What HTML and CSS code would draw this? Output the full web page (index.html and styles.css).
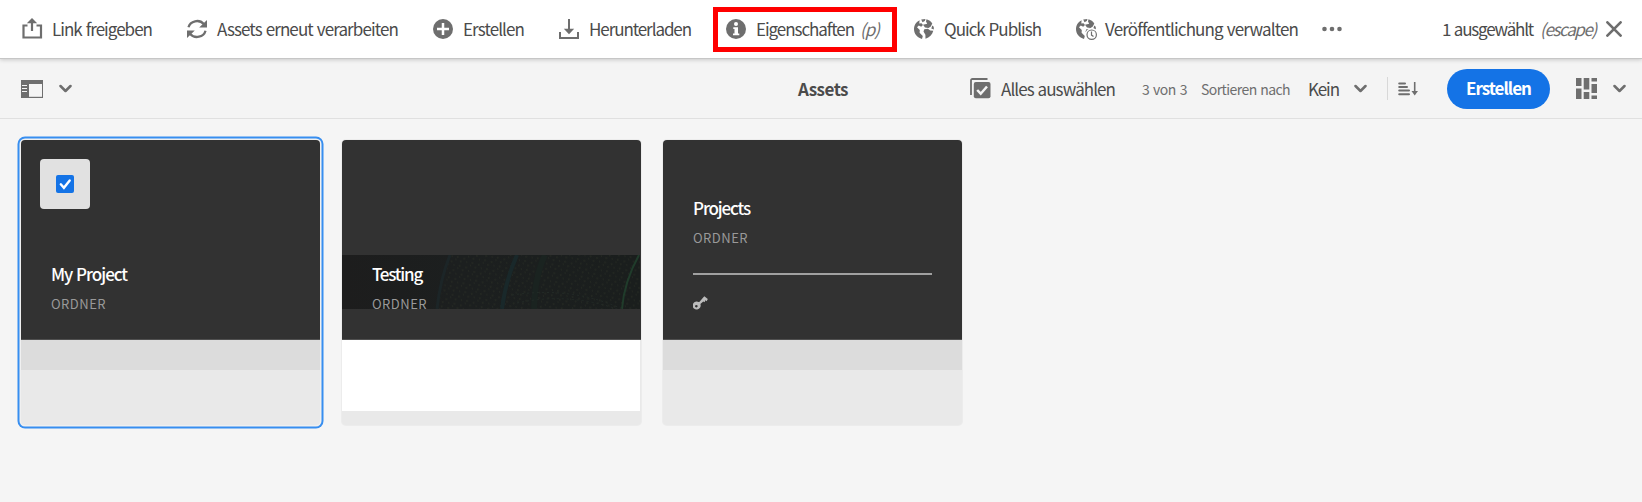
FILE: index.html
```
<!DOCTYPE html>
<html lang="de">
<head>
<meta charset="utf-8">
<title>Assets</title>
<link rel="stylesheet" href="styles.css">
</head>
<body>
<svg width="0" height="0" class="defs">
  <symbol id="globe" viewBox="0 0 20 20">
    <path d="M5.600 1.200C2.200 2.900 0 6.200 0 10c0 4.800 3.200 8.700 8 9.900L8.800 17 5.600 13.800 5.800 11 3 8.200 4.800 6.600 7.200 7.800 9 6 7.500 4.300 5.300 4.400Z"/>
    <path d="M7.200.5 11.500 0 10.800 2 8.500 3.200ZM12.500.3C15 1 17 2.400 18.300 4.500L16.800 7.600 14.500 9 11 8.600 9 5.700 13.200 4.700 12 2.500ZM10.300 10.300 13.900 9.800 16.200 11.500 19.300 11.800C18.300 15.700 15.500 18.600 11.500 19.800L11.400 15.700 9.500 12.600ZM18.300 6.500 19.700 7.800 19.900 10.500 17.300 9.500Z"/>
  </symbol>
  <symbol id="chevron" viewBox="0 0 13 9"><path d="M1.500 2 6.500 7 11.500 2" fill="none" stroke="#6e6e6e" stroke-width="2.500" stroke-linecap="round" stroke-linejoin="round"/></symbol>
</svg>
<header class="actions">
  <div class="action"><svg class="icon share" viewBox="0 0 22 22"><path d="M6.500 7.500H2.500v12h17.500V7.500h-4.500M11 13V4" fill="none" stroke="#6e6e6e" stroke-width="2.200"/><path d="M5.800 5.300 11 0 16.200 5.300Z"/></svg><span class="label w-link">Link freigeben</span></div>
  <div class="action"><svg class="icon" viewBox="0 0 20 20"><path d="M1.500 8.300A8.800 8.200 0 0 1 16.800 5M18.500 11.700A8.800 8.200 0 0 1 3.200 15" fill="none" stroke="#6e6e6e" stroke-width="2.300"/><path d="M20 1v7.500h-7.800ZM0 19v-7.500h7.800Z"/></svg><span class="label w-reprocess">Assets erneut verarbeiten</span></div>
  <div class="action"><svg class="icon" viewBox="0 0 20 20"><circle cx="10" cy="10" r="10"/><path d="M10 4v12M4 10h12" stroke="#fff" stroke-width="2.500"/></svg><span class="label w-create">Erstellen</span></div>
  <div class="action"><svg class="icon" viewBox="0 0 20 20"><path d="M1 13v6h18V13M10 0v12" fill="none" stroke="#6e6e6e" stroke-width="2"/><path d="M4.800 9.800H15.200L10 15.200Z"/></svg><span class="label w-download">Herunterladen</span></div>
  <div class="action highlighted"><svg class="icon" viewBox="0 0 20 20"><circle cx="10" cy="10" r="10"/><circle cx="10" cy="4.900" r="2" fill="#fff"/><path d="M7.300 8.300H12V14.600H13.300V16.300H7V14.600H8.500V10H7.300Z" fill="#fff"/></svg><span class="label w-props">Eigenschaften</span><i class="label shortcut w-p">(p)</i></div>
  <div class="action"><svg class="icon"><use href="#globe"/></svg><span class="label w-quick">Quick Publish</span></div>
  <div class="action"><svg class="icon schedule" viewBox="0 0 21 21"><use href="#globe" width="20" height="20"/><circle cx="15.700" cy="15.700" r="6.600" fill="#fff"/><circle cx="15.700" cy="15.700" r="4.700" fill="#fff" stroke="#6e6e6e" stroke-width="1.200"/><path d="M15.500 12.500v3.600l2 1.500" fill="none" stroke="#6e6e6e" stroke-width="1.200"/></svg><span class="label w-manage">Veröffentlichung verwalten</span></div>
  <svg class="more" viewBox="0 0 20 6"><circle cx="2.500" cy="3" r="2.300"/><circle cx="10" cy="3" r="2.300"/><circle cx="17.500" cy="3" r="2.300"/></svg>
  <div class="selection"><span class="label w-selected">1 ausgewählt</span><i class="label shortcut w-escape">(escape)</i><svg class="close" viewBox="0 0 15 15"><path d="M1.300 1.300 13.700 13.700M13.700 1.300 1.300 13.700" stroke="#6e6e6e" stroke-width="2.500" stroke-linecap="round"/></svg></div>
</header>
<nav class="bar">
  <div class="rail">
    <svg class="rail-icon" viewBox="0 0 22 18"><path d="M0 0H22V18H0Z"/><path d="M8 4H21V16.800H8Z" fill="#f4f4f4"/><path d="M1 5.500H6M1 8.500H6M1 11.500H6" stroke="#f4f4f4" stroke-width="1.200"/></svg>
    <svg class="chevron"><use href="#chevron"/></svg>
  </div>
  <strong class="label title w-assets">Assets</strong>
  <div class="tools">
    <svg class="select-icon" viewBox="0 0 21 21"><path d="M1 17V2.500Q1 1 2.500 1H17.500" fill="none" stroke="#6e6e6e" stroke-width="1.800"/><rect x="3.800" y="4" width="16.700" height="16.200" rx="2"/><path d="m7.200 12 3.500 3.700L17 8.500" fill="none" stroke="#f4f4f4" stroke-width="2.500"/></svg>
    <span class="label w-all">Alles auswählen</span>
    <span class="label small w-count">3 von 3</span>
    <span class="label small w-sort">Sortieren nach</span>
    <span class="label w-none">Kein</span>
    <svg class="chevron"><use href="#chevron"/></svg>
    <span class="divider"></span>
    <svg class="sort-icon" viewBox="0 0 20 14"><path d="M1.200 1.500H7M1.200 5H9M1.200 8.500H11M1.200 12.300H11" stroke="#6e6e6e" stroke-width="2" stroke-linecap="round"/><path d="M16.700 0v10" stroke="#6e6e6e" stroke-width="1.600"/><path d="M13.500 9H20L16.700 13.500Z"/></svg>
    <button class="create"><span class="label w-button">Erstellen</span></button>
    <svg class="view-icon" viewBox="0 0 21 21"><path d="M0 0H5.500V8H0ZM0 10.500H5.500V21H0ZM7.700 0H13.300V11.500H7.700ZM7.700 14H13.300V21H7.700ZM15.500 0H21V3.500H15.500ZM15.500 6H21V15H15.500ZM15.500 17.500H21V21H15.500Z"/></svg>
    <svg class="chevron"><use href="#chevron"/></svg>
  </div>
</nav>
<main class="cards">
  <article class="card selected">
    <div class="cover">
      <span class="check"><svg viewBox="0 0 18 18"><rect width="18" height="18" rx="2" fill="#1473e6"/><path d="m4.800 9.300 3.100 3.500L13.700 5.500" fill="none" stroke="#fff" stroke-width="2.400" stroke-linecap="round"/></svg></span>
      <h2 class="label w-my">My Project</h2><p class="label w-folder">ORDNER</p>
    </div>
    <div class="strip"></div>
  </article>
  <article class="card">
    <div class="cover">
      <svg class="artwork" viewBox="0 0 298 54">
        <defs>
          <linearGradient id="shade"><stop offset="0" stop-color="#1d1d1d"/><stop offset=".4" stop-color="#1c1f1f"/><stop offset="1" stop-color="#1a1e1d"/></linearGradient>
          <pattern id="dots" width="13" height="9" patternUnits="userSpaceOnUse" patternTransform="rotate(-12)"><path d="M1 2h1.500M6 1h1M10 4h1.500M3 6h1M8 8h1.500" stroke="#303328" stroke-width=".8"/></pattern>
        </defs>
        <path d="M0 0H298V54H0Z" fill="url(#shade)"/><path d="M108 0H298V54H96Z" fill="url(#dots)"/>
        <g fill="none"><path d="M108 0Q98 25 95 54" stroke="#1c2527" stroke-width="3"/><path d="M175 0Q163 27 160 54" stroke="#19282a" stroke-width="4"/><path d="M297 0Q282 27 280 54" stroke="#203c2b" stroke-width="2"/><path d="M203 0Q193 20 192 54" stroke="#1a2320" stroke-width="6"/><path d="M170 40Q230 31 280 54M175 48Q225 37 275 54" stroke="#232b27" stroke-dasharray="2 3"/></g>
      </svg>
      <h2 class="label w-testing">Testing</h2><p class="label w-folder">ORDNER</p>
    </div>
    <div class="blank"></div>
  </article>
  <article class="card">
    <div class="cover detailed">
      <h2 class="label w-projects">Projects</h2><p class="label w-folder">ORDNER</p>
      <div class="meta"><svg class="key" viewBox="0 0 16 14"><path fill-rule="evenodd" d="M11.300.2 14.800 3.100 13.700 5.300 12.400 4.300 11.600 6.300 10.300 5.500 7.400 8.100A4 4 0 1 1 4.800 5.700Q5.600 5.800 6.300 6.100ZM3.300 8.900a1.300 1.300 0 1 0 .1 0Z"/></svg></div>
    </div>
    <div class="strip"></div>
  </article>
</main>
<script src="fit.js"></script>
</body>
</html>
```
FILE: styles.css
```
* { box-sizing: border-box; }
body {
  margin: 0;
  height: 502px;
  overflow: hidden;
  background: #f5f5f5;
  color: #4b4b4b;
  font: 17px/24px "Noto Sans CJK SC", "Noto Sans", sans-serif;
}
svg { display: block; flex: none; fill: #6e6e6e; }
.defs { position: absolute; }
.label { display: block; flex: none; white-space: nowrap; word-spacing: 1px; }
.actions {
  position: relative;
  display: flex;
  align-items: center;
  gap: 35px;
  height: 59px;
  padding: 0 20px 0 22px;
  background: #fff;
  border-bottom: 1px solid #c6c6c6;
  box-shadow: 0 1px 4px rgba(0, 0, 0, .18);
}
.action { display: flex; align-items: center; gap: 10px; position: relative; }
.icon { width: 20px; height: 20px; }
.share { width: 22px; height: 22px; margin: -1px -1px 0; }
.schedule { width: 21px; height: 21px; margin-right: -2px; }
.shortcut { margin-left: -4px; color: #6e6e6e; }
.highlighted::after {
  content: "";
  position: absolute;
  inset: -10px -18px -11px -13px;
  border: 5px solid #f00;
}
.more { width: 20px; height: 6px; margin-left: -11px; }
.selection { display: flex; align-items: center; gap: 10px; margin-left: auto; }
.selection .shortcut { margin-left: -3px; }
.close { width: 16px; height: 16px; }
.bar {
  display: grid;
  grid-template-columns: 798px 50px 1fr;
  align-items: center;
  height: 60px;
  background: #f4f4f4;
  border-bottom: 1px solid #e0e0e0;
}
.rail { display: flex; align-items: center; gap: 16px; padding-left: 21px; }
.rail-icon { width: 22px; height: 18px; }
.chevron { width: 13px; height: 9px; }
.title { font-weight: 700; }
.tools { display: flex; align-items: center; padding-left: 122px; }
.select-icon { width: 21px; height: 21px; margin-right: 10px; }
.small { font-size: 14px; color: #6e6e6e; }
.w-all { margin-right: 27px; }
.w-count { margin-right: 14px; }
.w-sort { margin-right: 18px; }
.w-none { margin-right: 15px; }
.divider { width: 1px; height: 23px; margin: 0 10px 0 20px; background: #d8d8d8; }
.sort-icon { width: 20px; height: 14px; margin-right: 29px; }
.create {
  width: 103px;
  height: 40px;
  padding: 0 19px 2px;
  border: 0;
  border-radius: 20px;
  background: #1473e6;
  color: #fff;
  font: inherit;
  font-weight: 700;
}
.view-icon { width: 21px; height: 21px; margin: 0 16px 0 26px; }
.cards { display: flex; gap: 22px; padding: 21px; }
.card { width: 299px; height: 285px; border-radius: 4px; background: #e9e9e9; box-shadow: 0 0 0 1px #ececec; }
.selected { box-shadow: 0 0 0 1.5px #f0f0f0, 0 0 0 3.5px #378ef0; }
.cover {
  position: relative;
  display: flex;
  flex-direction: column;
  justify-content: flex-end;
  height: 200px;
  padding: 0 30px 25px;
  border-radius: 4px 4px 0 0;
  background: #323232;
  border-bottom: 1px solid #505050;
}
h2, p { position: relative; margin: 0; }
h2 { color: #fff; font-size: 17px; line-height: 24px; font-weight: 500; margin-bottom: 8px; }
p { color: #999; font-size: 13px; line-height: 20px; }
.check {
  position: absolute;
  top: 19px;
  left: 19px;
  display: grid;
  place-items: center;
  width: 50px;
  height: 50px;
  border-radius: 4px;
  background: #e1e1e1;
}
.check svg { width: 18px; height: 18px; }
.artwork { position: absolute; left: 0; top: 115px; width: 298px; height: 54px; }
.detailed { padding-bottom: 29px; }
.meta { margin-top: 25px; padding-top: 21px; border-top: 2px solid #a0a0a0; }
.key { width: 16px; height: 14px; fill: #bcbcbc; }
.strip { height: 30px; background: #dcdcdc; }
.blank { width: 298px; height: 71px; background: #fff; }
```
FILE: fit.js
```
// Tracks each label so that its text fills the column reserved for it.
const widths = {
  link: 100, reprocess: 181, create: 61, download: 102, props: 98, p: 19, quick: 97, manage: 193,
  selected: 91, escape: 56, assets: 50, all: 114, count: 45, sort: 89, none: 31, button: 65,
  my: 76, testing: 50, projects: 57, folder: 55
};
for (const [name, width] of Object.entries(widths)) {
  for (const el of document.querySelectorAll('.w-' + name)) {
    el.style.width = 'max-content';
    const natural = el.getBoundingClientRect().width;
    el.style.letterSpacing = (width - natural) / el.textContent.length + 'px';
    el.style.width = width + 'px';
  }
}
```
